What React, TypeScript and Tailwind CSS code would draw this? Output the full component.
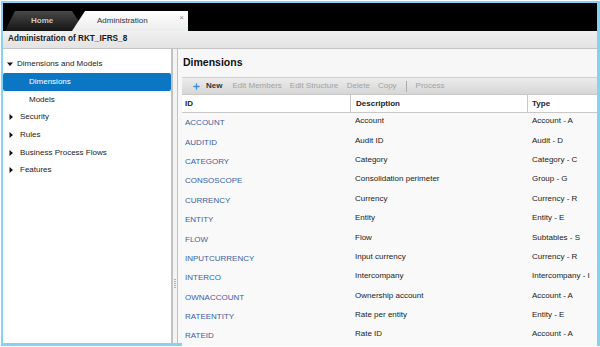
import { Plus } from "lucide-react";

const rows = [
  { id: "ACCOUNT", desc: "Account", type: "Account - A" },
  { id: "AUDITID", desc: "Audit ID", type: "Audit - D" },
  { id: "CATEGORY", desc: "Category", type: "Category - C" },
  { id: "CONSOSCOPE", desc: "Consolidation perimeter", type: "Group - G" },
  { id: "CURRENCY", desc: "Currency", type: "Currency - R" },
  { id: "ENTITY", desc: "Entity", type: "Entity - E" },
  { id: "FLOW", desc: "Flow", type: "Subtables - S" },
  { id: "INPUTCURRENCY", desc: "Input currency", type: "Currency - R" },
  { id: "INTERCO", desc: "Intercompany", type: "Intercompany - I" },
  { id: "OWNACCOUNT", desc: "Ownership account", type: "Account - A" },
  { id: "RATEENTITY", desc: "Rate per entity", type: "Entity - E" },
  { id: "RATEID", desc: "Rate ID", type: "Account - A" },
];

const tree = ["Security", "Rules", "Business Process Flows", "Features"];

function Caret({ open }: { open?: boolean }) {
  return (
    <svg width="6" height="6" viewBox="0 0 6 6" className="shrink-0">
      {open ? <path d="M0 1.5 L6 1.5 L3 5 Z" fill="#111" /> : <path d="M1.5 0 L5 3 L1.5 6 Z" fill="#111" />}
    </svg>
  );
}

export default function App() {
  return (
    <div className="h-[347px] w-[600px] overflow-hidden bg-white pl-[1px] pt-[1px] font-['Liberation_Sans',Arial,sans-serif] text-[8px] text-[#222]">
      <div className="flex h-[345px] w-[599px] flex-col border-[#84d3f3] border-t-2 border-r-[3px] border-b-[3px] border-l-2">
        {/* top bar with tabs */}
        <div className="flex h-[28px] shrink-0 items-end bg-black pt-[8px]">
          <div className="ml-[2px] flex h-[20px] w-[80px] items-center bg-gradient-to-b from-[#4a4a4a] to-[#151515] pl-[26px] font-bold text-[#c9c9c9] [clip-path:polygon(0_100%,10px_0,67px_0,100%_100%)]">
            Home
          </div>
          <div className="relative -ml-[13px] flex h-[20px] w-[116px] items-center bg-gradient-to-b from-white to-[#ececec] pl-[25px] text-[#333] [clip-path:polygon(0_100%,13px_0,100%_0,100%_100%)]">
            Administration
            <span className="absolute top-[1px] right-[4px] text-[8px] text-[#888]">×</span>
          </div>
        </div>

        {/* title bar */}
        <div className="flex h-[18px] shrink-0 items-center border-[#c4c4c4] border-b bg-gradient-to-b from-[#f0f0f0] to-[#e3e3e3] pl-[5px] font-bold text-[8.2px] text-[#1a1a1a]">
          Administration of RKT_IFRS_8
        </div>

        <div className="flex min-h-0 flex-1">
          {/* left tree */}
          <div className="w-[168px] shrink-0 bg-white pt-[6.5px]">
            <div className="flex h-[17.7px] items-center gap-[4px] pl-[4px]">
              <Caret open />
              <span>Dimensions and Models</span>
            </div>
            <div className="flex h-[17.7px] items-center rounded-[2px] bg-[#0b77c4] pl-[26px] text-white">Dimensions</div>
            <div className="flex h-[17.7px] items-center pl-[26px]">Models</div>
            {tree.map((t) => (
              <div key={t} className="flex h-[17.7px] items-center gap-[6px] pl-[5px]">
                <Caret />
                <span>{t}</span>
              </div>
            ))}
          </div>

          {/* splitter */}
          <div className="flex w-[7px] shrink-0 items-stretch bg-[#f3f3f3]">
            <div className="w-[1.5px] bg-[#c2c2c2]" />
            <div className="flex flex-1 flex-col items-center justify-end pb-[55px]">
              <div className="flex flex-col gap-[1px]">
                {[0, 1, 2, 3, 4].map((i) => (
                  <div key={i} className="h-[1px] w-[2px] bg-[#b0b0b0]" />
                ))}
              </div>
            </div>
            <div className="w-[1.5px] bg-[#c2c2c2]" />
          </div>

          {/* right panel */}
          <div className="flex min-w-0 flex-1 flex-col bg-[#f7f7f7] pl-[4px]">
            <div className="flex h-[28px] shrink-0 items-center pl-[1px] font-bold text-[#111] text-[10.5px]">Dimensions</div>

            <div className="flex h-[17px] shrink-0 items-center border-[#d0d0d0] border-t bg-gradient-to-b from-[#ececec] to-[#d6d6d6] pl-[10px] text-[#a2a2a2]">
              <Plus size={9} strokeWidth={3.5} className="text-[#3a8fd8]" />
              <span className="mr-[10px] ml-[5px] font-bold text-[#333]">New</span>
              <span className="mr-[8px]">Edit Members</span>
              <span className="mr-[8.5px]">Edit Structure</span>
              <span className="mr-[8px]">Delete</span>
              <span>Copy</span>
              <span className="mx-[9px] h-[11px] w-[1px] bg-[#aaa]" />
              <span>Process</span>
            </div>

            <div className="flex h-[19px] shrink-0 items-stretch border-[#c8c8c8] border-y bg-white font-bold text-[#222]">
              <div className="flex w-[168px] items-center pl-[3px]">ID</div>
              <div className="flex w-[177px] items-center border-[#c8c8c8] border-l pl-[5px]">Description</div>
              <div className="flex flex-1 items-center border-[#c8c8c8] border-l pl-[4px]">Type</div>
            </div>

            <div className="bg-[#f9f9f9]">
              {rows.map((r) => (
                <div key={r.id} className="flex h-[19.4px] items-center">
                  <div className="w-[168px] pt-[1px] pl-[3px] text-[#3d5d9f]">{r.id}</div>
                  <div className="w-[177px] pb-[3px] pl-[5px] text-[#222]">{r.desc}</div>
                  <div className="flex-1 pb-[3px] pl-[5px] text-[#222]">{r.type}</div>
                </div>
              ))}
            </div>
          </div>
        </div>
      </div>
    </div>
  );
}
